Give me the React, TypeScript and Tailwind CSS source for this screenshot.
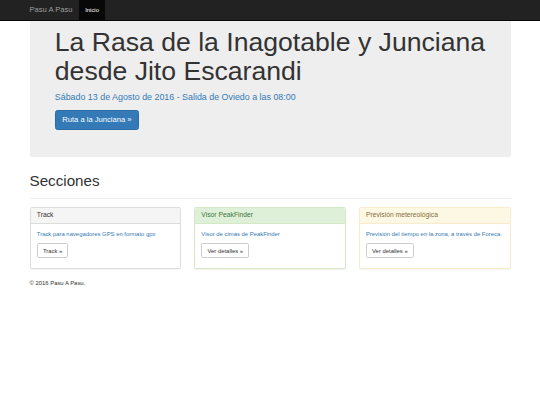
export default function App() {
  const panels = [
    {
      title: 'Track',
      text: 'Track para navegadores GPS en formato gpx',
      button: 'Track »',
      head: 'bg-[#f5f5f5] text-[#333] border-[#ddd]',
      border: 'border-[#ddd]',
    },
    {
      title: 'Visor PeakFinder',
      text: 'Visor de cimas de PeakFinder',
      button: 'Ver detalles »',
      head: 'bg-[#dff0d8] text-[#3c763d] border-[#d6e9c6]',
      border: 'border-[#d6e9c6]',
    },
    {
      title: 'Previsión metereológica',
      text: 'Previsión del tiempo en la zona, a través de Foreca.',
      button: 'Ver detalles »',
      head: 'bg-[#fcf8e3] text-[#8a6d3b] border-[#faebcc]',
      border: 'border-[#faebcc]',
    },
  ];

  return (
    <div className="min-h-screen bg-white text-[#333] font-['Liberation_Sans',Arial,sans-serif]">
      {/* navbar */}
      <nav className="h-[21px] bg-[#222] border-b border-[#080808]">
        <div className="flex h-full px-[29.5px]">
          <a className="flex items-center pr-[6.3px] text-[7.6px] text-[#9d9d9d]">Pasu A Pasu</a>
          <a className="flex items-center px-[6.3px] bg-[#080808] text-[5.9px] text-white">Inicio</a>
        </div>
      </nav>

      <div className="px-[29.5px]">
        {/* jumbotron */}
        <div className="bg-[#eee] rounded-b-[2.5px] px-[25.3px] pt-[7px] pb-[20px] mb-[12.7px]">
          <h1 className="text-[26.6px] leading-[29.3px] mb-[4.2px]">
            La Rasa de la Inagotable y Junciana desde Jito Escarandi
          </h1>
          <p className="text-[8.9px] leading-[12.7px] text-[#337ab7] mb-[6.3px]">
            Sábado 13 de Agosto de 2016 - Salida de Oviedo a las 08:00
          </p>
          <div className="flex mb-[6.3px]">
            <a className="bg-[#337ab7] border border-[#2e6da4] text-white text-[7.6px] leading-[10.1px] px-[6.5px] py-[4.2px] rounded-[2.5px]">
              Ruta a la Junciana »
            </a>
          </div>
        </div>

        {/* sections */}
        <div className="mt-[16.5px] border-b border-[#eee] pb-[3.8px] mb-[8px]">
          <h1 className="text-[15.2px] leading-[16.7px] mb-[4.2px]">Secciones</h1>
        </div>

        <div className="grid grid-cols-3 gap-[12.7px]">
          {panels.map((p, i) => (
            <div
              key={i}
              className={`border ${p.border} rounded-[1.7px] mb-[10px] bg-white shadow-[0_1px_1px_rgba(0,0,0,0.05)]`}
            >
              <div className={`px-[6.3px] py-[4.2px] border-b rounded-t-[1.7px] text-[6.75px] leading-[6.8px] ${p.head}`}>
                {p.title}
              </div>
              <div className="p-[6.3px]">
                <p className="text-[5.9px] leading-[8.4px] text-[#337ab7] mb-[4.4px]">{p.text}</p>
                <div className="flex mb-[3px]">
                  <a className="border border-[#ccc] bg-white text-[#333] text-[5.9px] leading-[8.4px] px-[5.1px] py-[2.5px] rounded-[1.7px]">
                    {p.button}
                  </a>
                </div>
              </div>
            </div>
          ))}
        </div>

        <footer>
          <p className="text-[5.9px] leading-[8.4px]">© 2016 Pasu A Pasu.</p>
        </footer>
      </div>
    </div>
  );
}
